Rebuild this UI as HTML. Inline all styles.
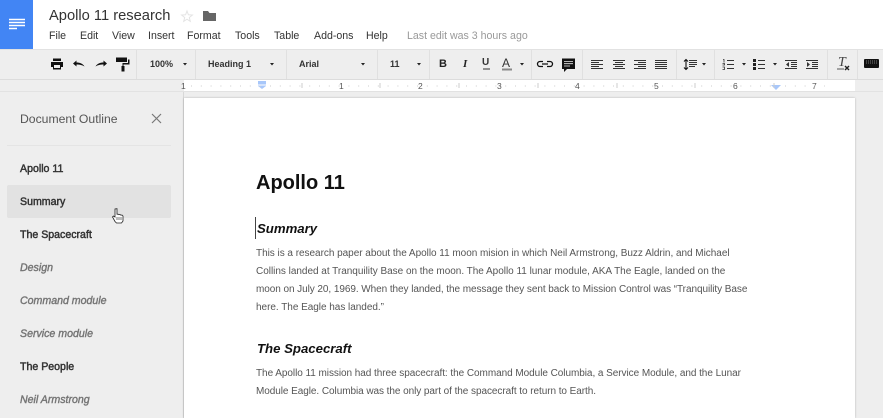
<!DOCTYPE html>
<html><head><meta charset="utf-8">
<style>
html,body{margin:0;padding:0;background:#eee}
body{width:883px;height:418px;overflow:hidden;position:relative;font-family:"Liberation Sans",sans-serif}
#w{position:absolute;left:0;top:0;width:883px;height:418px;overflow:hidden;background:#eee;filter:blur(.35px)}
.t{position:absolute;white-space:nowrap;line-height:14px}
.b{position:absolute}
.m{top:29px;font-size:10.6px;color:#333}
.tb{top:57px;font-size:9px;font-weight:bold;color:#333}
.s{left:20px;font-size:10.6px;color:#333;-webkit-text-stroke:.45px #333}
.i{color:#757575;font-style:italic;-webkit-text-stroke:.4px #757575}
.p{left:256px;font-size:10px;color:#555}
.h{left:257px;font-size:13.2px;font-weight:bold;font-style:italic;color:#111}
.sep{position:absolute;top:50px;width:1px;height:29px;background:#e0e0e0}
.r{position:absolute;top:79px;font-size:8.5px;color:#555;line-height:14px}
svg{position:absolute;left:0;top:0}
</style></head><body><div id="w">
<div class="b" style="left:0;top:0;width:883px;height:49px;background:#fff"></div>
<div class="b" style="left:0;top:0;width:33px;height:49px;background:#4285f4"></div>
<div class="b" style="left:0;top:49px;width:883px;height:31px;background:#eee;border-top:1px solid #e2e2e2;box-sizing:border-box;border-bottom:1px solid #dcdcdc"></div>
<div class="b" style="left:184px;top:80px;width:671px;height:12px;background:#fff"></div>
<div class="b" style="left:0;top:91px;width:883px;height:1px;background:#e2e2e2"></div>
<div class="b" style="left:183px;top:92px;width:1px;height:326px;background:#d8d8d8"></div>
<div class="b" style="left:184px;top:98px;width:671px;height:320px;background:#fff;box-shadow:0 0 2px rgba(0,0,0,.25)"></div>

<div class="t" style="left:49px;top:8px;font-size:14.7px;color:#333;line-height:16px">Apollo 11 research</div>
<div class="t m" style="left:49px">File</div>
<div class="t m" style="left:80px">Edit</div>
<div class="t m" style="left:112px">View</div>
<div class="t m" style="left:148px">Insert</div>
<div class="t m" style="left:187px">Format</div>
<div class="t m" style="left:235px">Tools</div>
<div class="t m" style="left:274px">Table</div>
<div class="t m" style="left:314px">Add-ons</div>
<div class="t m" style="left:366px">Help</div>
<div class="t m" style="left:407px;color:#999">Last edit was 3 hours ago</div>

<div class="t tb" style="left:150px">100%</div>
<div class="t tb" style="left:208px">Heading 1</div>
<div class="t tb" style="left:299px">Arial</div>
<div class="t tb" style="left:390px">11</div>
<div class="t" style="left:439px;top:57px;font-size:11px;font-weight:bold;color:#222">B</div>
<div class="t" style="left:463px;top:57px;font-size:11px;font-weight:bold;font-style:italic;color:#222;font-family:'Liberation Serif',serif">I</div>
<div class="t" style="left:482px;top:56px;font-size:10px;font-weight:bold;color:#333">U</div>
<div class="t" style="left:502px;top:56px;font-size:12px;color:#333">A</div>
<div class="t" style="left:838px;top:56px;font-size:14px;font-style:italic;color:#444;font-family:'Liberation Serif',serif">T</div>

<div class="sep" style="left:136px"></div><div class="sep" style="left:195px"></div><div class="sep" style="left:286px"></div>
<div class="sep" style="left:377px"></div><div class="sep" style="left:429px"></div><div class="sep" style="left:531px"></div>
<div class="sep" style="left:582px"></div><div class="sep" style="left:676px"></div><div class="sep" style="left:714px"></div>
<div class="sep" style="left:827px"></div><div class="sep" style="left:857px"></div>

<div class="r" style="left:181px">1</div><div class="r" style="left:339px">1</div><div class="r" style="left:418px">2</div>
<div class="r" style="left:497px">3</div><div class="r" style="left:575px">4</div><div class="r" style="left:654px">5</div>
<div class="r" style="left:733px">6</div><div class="r" style="left:812px">7</div>

<svg width="883" height="418" viewBox="0 0 883 418">
<path d="M9 19.500h16M9 22.500h16M9 25.500h16M9 28.500h8" stroke="#fff" stroke-width="1.400" fill="none"/>
<path d="M187 11l1.400 3.800 4 .2-3.100 2.500 1 3.900-3.300-2.200-3.300 2.200 1-3.900-3.100-2.500 4-.2z" fill="none" stroke="#e4e4e4"/>
<path d="M203 11h5l1.500 2h6.500v8h-13z" fill="#666"/>
<!-- print -->
<path d="M53 58.500h8v2.500h-8zM51 62h12v5h-2v2.500h-8v-2.500h-2z" fill="#111"/><path d="M54 65h6v3h-6z" fill="#eee"/>
<!-- undo redo -->
<path d="M73 63.500l3.500-3v2c3.500 0 6.500 1.300 8 4-2.500-1.500-4.500-2-8-2v2z" fill="#111"/>
<path d="M107 63.500l-3.500-3v2c-3.500 0-6.500 1.300-8 4 2.500-1.500 4.500-2 8-2v2z" fill="#111"/>
<!-- paint -->
<path d="M116 57.500h11v4.500h-11zM128 59.500h1.500v5h-6v1.500h1v5.500h-3v-5.500h1v-3h5.500v-2.500h-0z" fill="#111"/>
<!-- carets -->
<path d="M183 63h4l-2 2.500zM270 63h4l-2 2.500zM361 63h4l-2 2.500zM417 63h4l-2 2.500zM520 63h4l-2 2.500zM702 63h4l-2 2.500zM742 63h4l-2 2.500zM773 63h4l-2 2.500z" fill="#222"/>
<path d="M483 69h7" stroke="#333" stroke-width="1"/><path d="M502 69.500h10" stroke="#888" stroke-width="2"/>
<!-- link -->
<path d="M543 61.500h-3a2.500 2.500 0 0 0 0 5h3M547 61.500h3a2.500 2.500 0 0 1 0 5h-3M542 64h6" stroke="#111" stroke-width="1.300" fill="none"/>
<!-- comment -->
<path d="M562 58.500h13v10.500h-8l-3 3v-3h-2z" fill="#111"/><path d="M564 61.500h9M564 63.700h9M564 66h6" stroke="#eee" stroke-width=".8"/>
<g stroke="#333" stroke-width="1.100" fill="none">
<path d="M591 60.500h12M591 62.500h8M591 64.500h12M591 66.500h8M591 68.500h12"/>
<path d="M613 60.500h12M615 62.500h8M613 64.500h12M615 66.500h8M613 68.500h12"/>
<path d="M634 60.500h12M638 62.500h8M634 64.500h12M638 66.500h8M634 68.500h12"/>
<path d="M655 60.500h12M655 62.500h12M655 64.500h12M655 66.500h12M655 68.500h12"/>
<path d="M689 60.500h8M689 62.500h8M689 64.500h8M689 66.500h6"/>
<path d="M686 60v9M684 61.500l2-2 2 2M684 67.500l2 2 2-2" stroke="#111"/>
<path d="M727 60.500h7M727 64.500h7M727 68.500h7"/>
<path d="M758 60.500h7M758 64.500h7M758 68.500h7"/>
<path d="M785 60.500h12M791 62.500h6M791 64.500h6M791 66.500h6M785 68.500h12"/>
<path d="M806 60.500h12M812 62.500h6M812 64.500h6M812 66.500h6M806 68.500h12"/>
<path d="M723 59.500h1v3M722.500 63.500h2v1.500h-2M722.500 67h2v2.500h-2" stroke="#333" stroke-width=".8"/>
</g>
<path d="M753 59h3v3h-3zM753 63h3v3h-3zM753 67h3v3h-3z" fill="#222"/>
<path d="M789 62v5l-3-2.500zM807 62v5l3-2.500z" fill="#333"/>
<path d="M845 66l4 4M849 66l-4 4" stroke="#222" stroke-width="1.400"/><path d="M837 69h7" stroke="#555"/>
<rect x="864" y="59" width="15" height="9" rx="1" fill="#111"/><path d="M866 61h11M866 63h11" stroke="#999" stroke-width=".7" stroke-dasharray="1 1"/>
<!-- ruler -->
<path d="M262 81h-4v5l4 3 4-3v-5z" fill="#a8c7fa"/><path d="M258 85h8" stroke="#fff"/>
<path d="M771 85h10l-5 5z" fill="#a8c7fa"/>
<path d="M191 86h71M270 86h506M785 86h40" stroke="#ccc" stroke-width="1" stroke-dasharray="1 8.800"/>
<path d="M302 83v5M380 83v5M459 83v5M538 83v5M617 83v5M695 83v5M774 83v5" stroke="#ccc"/>
<path d="M152 114l9 9M161 114l-9 9" stroke="#777" stroke-width="1.200" fill="none"/>
<path d="M255.500 217v22" stroke="#444" stroke-width="1"/>
</svg>

<div class="t" style="left:20px;top:112px;font-size:12.200px;color:#555">Document Outline</div>
<div class="b" style="left:7px;top:145px;width:164px;height:1px;background:#e4e4e4"></div>
<div class="b" style="left:7px;top:185px;width:164px;height:33px;background:#e2e2e2;border-radius:2px"></div>
<svg width="883" height="418" viewBox="0 0 883 418" style="z-index:1">
<path d="M115 209v8l-1.500-1-1 1 2.500 4.500 1.500 1.500h5l1.500-2v-5l-1-1-1 .2-1-.7-1 .2-1-.5h-1v-5.500z" fill="#fff" stroke="#222" stroke-width=".8"/>
<path d="M117 217v3M119 217v3M121 217v3" stroke="#222" stroke-width=".6"/>
</svg>
<div class="t s" style="top:162px">Apollo 11</div>
<div class="t s" style="top:195px">Summary</div>
<div class="t s" style="top:228px">The Spacecraft</div>
<div class="t s i" style="top:261px">Design</div>
<div class="t s i" style="top:294px">Command module</div>
<div class="t s i" style="top:327px">Service module</div>
<div class="t s" style="top:360px">The People</div>
<div class="t s i" style="top:393px">Neil Armstrong</div>

<div class="t" style="left:256px;top:171px;font-size:20px;line-height:24px;font-weight:bold;color:#111">Apollo 11</div>
<div class="t h" style="top:222px">Summary</div>
<div class="t p" style="top:247px;letter-spacing:-.03px">This is a research paper about the Apollo 11 moon mision in which Neil Armstrong, Buzz Aldrin, and Michael</div>
<div class="t p" style="top:265px;letter-spacing:-.02px">Collins landed at Tranquility Base on the moon. The Apollo 11 lunar module, AKA The Eagle, landed on the</div>
<div class="t p" style="top:283px;letter-spacing:-.064px">moon on July 20, 1969. When they landed, the message they sent back to Mission Control was “Tranquility Base</div>
<div class="t p" style="top:301px;letter-spacing:-.03px">here. The Eagle has landed.”</div>
<div class="t h" style="top:342px">The Spacecraft</div>
<div class="t p" style="top:367px;letter-spacing:-.05px">The Apollo 11 mission had three spacecraft: the Command Module Columbia, a Service Module, and the Lunar</div>
<div class="t p" style="top:385px;letter-spacing:-.06px">Module Eagle. Columbia was the only part of the spacecraft to return to Earth.</div>
</div></body></html>
